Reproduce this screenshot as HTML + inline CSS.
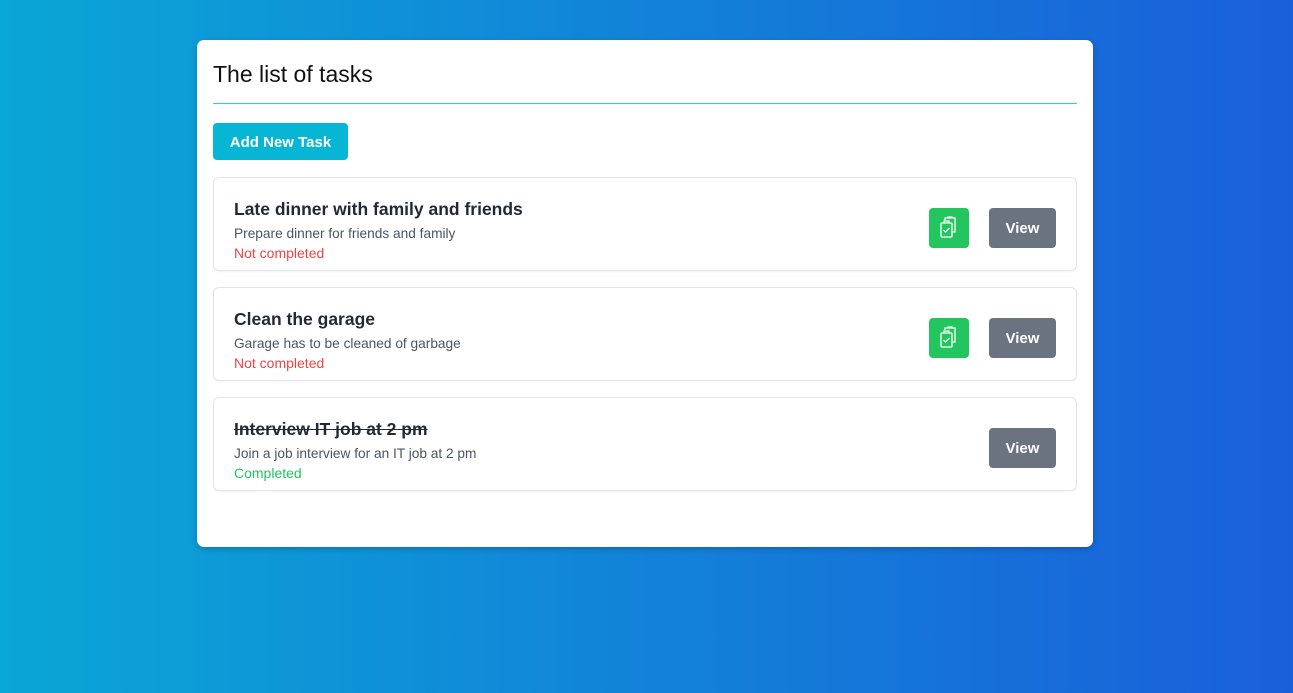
<!DOCTYPE html>
<html><head><style>
*{box-sizing:border-box;margin:0;padding:0}
body{width:1293px;height:693px;overflow:hidden;background:linear-gradient(90deg,#0aa6d6,#1a5fda);font-family:"Liberation Sans",sans-serif}
.card{position:absolute;left:197px;top:40px;width:896px;height:507px;background:#fff;border-radius:7px;box-shadow:0 2px 6px rgba(0,0,0,.2)}
h1{position:absolute;left:16px;top:21px;font-size:23px;font-weight:400;color:#111}
.sep{position:absolute;left:16px;top:63px;width:864px;height:1px;background-color:#22d3ee}
.add{position:absolute;left:16px;top:83px;width:135px;height:37px;background:#06b6d4;color:#fff;border-radius:4px;font-weight:bold;font-size:15px;line-height:39px;text-align:center}
.task{position:absolute;left:16px;width:864px;height:94px;border:1px solid #e2e5e9;border-radius:6px;box-shadow:0 1px 2px rgba(0,0,0,.05)}
.t{position:absolute;left:20px;top:21px;font-size:17.5px;font-weight:bold;color:#1f2937}
.d{position:absolute;left:20px;top:48px;font-size:13.7px;color:#4b5563}
.s{position:absolute;left:20px;top:67px;font-size:14px}
.g{position:absolute;left:715px;top:30px;width:40px;height:40px;background:#22c55e;border-radius:4px}
.v{position:absolute;left:775px;top:30px;width:67px;height:40px;background:#6b7280;border-radius:4px;color:#fff;font-weight:bold;font-size:15px;text-align:center;line-height:42px}
</style></head><body>
<div class="card">
<h1>The list of tasks</h1>
<div class="sep"></div>
<div class="add">Add New Task</div>
<div class="task" style="top:137px"><div class="t">Late dinner with family and friends</div><div class="d">Prepare dinner for friends and family</div><div class="s" style="color:#ef4444">Not completed</div>
<div class="g"><svg width="40" height="40" viewBox="0 0 40 40" fill="none" stroke="#fff" stroke-width="1.3"><rect x="12" y="15" width="11" height="14" rx="1"/><path d="M15 15v-2h5v2"/><path d="M16 12v-2h10v14h-3"/><path d="M19 10v-1h4v1"/><path d="M14.5 22l2 2 4-4"/></svg></div><div class="v">View</div></div>
<div class="task" style="top:247px"><div class="t">Clean the garage</div><div class="d">Garage has to be cleaned of garbage</div><div class="s" style="color:#ef4444">Not completed</div>
<div class="g"><svg width="40" height="40" viewBox="0 0 40 40" fill="none" stroke="#fff" stroke-width="1.3"><rect x="12" y="15" width="11" height="14" rx="1"/><path d="M15 15v-2h5v2"/><path d="M16 12v-2h10v14h-3"/><path d="M19 10v-1h4v1"/><path d="M14.5 22l2 2 4-4"/></svg></div><div class="v">View</div></div>
<div class="task" style="top:357px"><div class="t" style="text-decoration:line-through">Interview IT job at 2 pm</div><div class="d">Join a job interview for an IT job at 2 pm</div><div class="s" style="color:#22c55e">Completed</div><div class="v">View</div></div>
</div>
</body></html>
